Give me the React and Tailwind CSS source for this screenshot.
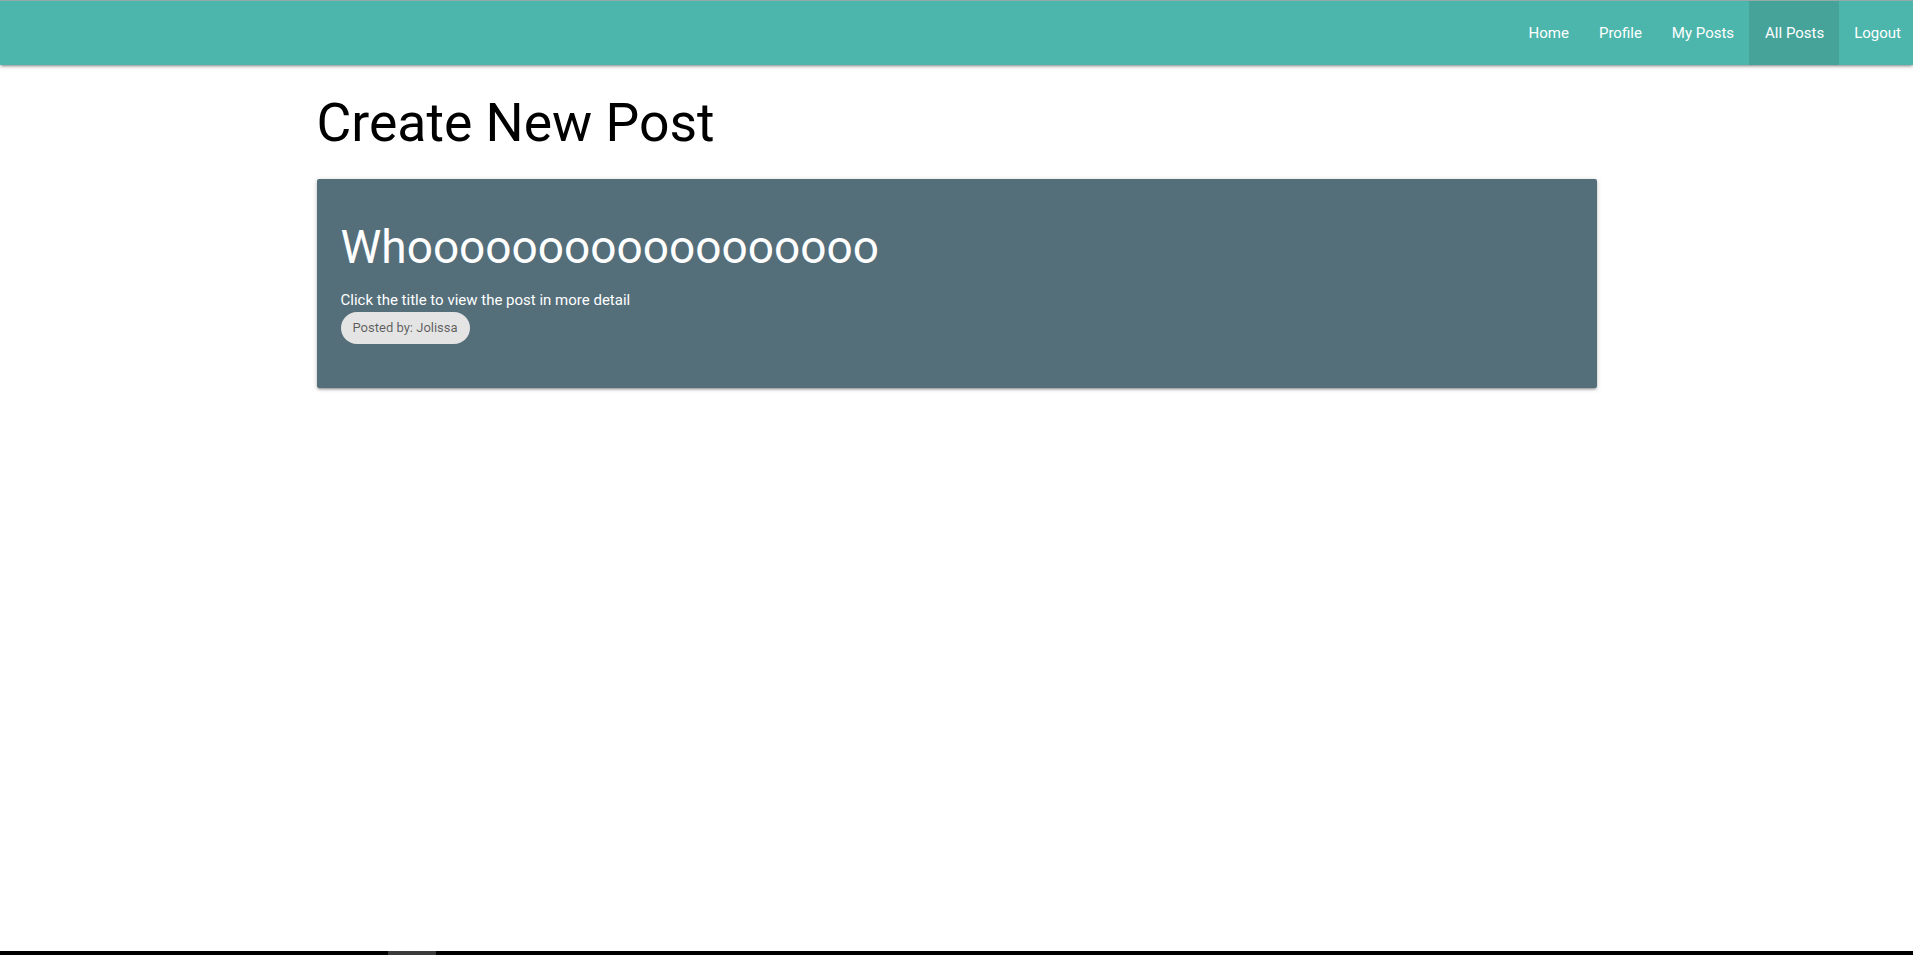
import React from "react";

const links = ["Home", "Profile", "My Posts", "All Posts", "Logout"];

function Navbar() {
  return (
    <nav className="h-[65px] bg-[#4db6ac] border-t border-[#93aaa8] shadow-[0_2px_2px_0_rgba(0,0,0,0.14),0_3px_1px_-2px_rgba(0,0,0,0.12),0_1px_5px_0_rgba(0,0,0,0.2)] flex justify-end relative z-10">
      <ul className="flex h-full">
        {links.map((l) => (
          <li key={l} className="h-full">
            <a
              href="#"
              className={
                "h-full flex items-center text-[15px] text-white " +
                (l === "All Posts" ? "bg-black/10 pl-[16px] pr-[15px]" : l === "Logout" ? "pl-[15px] pr-[12px]" : "px-[15px]")
              }
            >
              {l}
            </a>
          </li>
        ))}
      </ul>
    </nav>
  );
}

function PostCard({ title, author }) {
  return (
    <div className="bg-[#546e7a] rounded-[2px] shadow-[0_2px_2px_0_rgba(0,0,0,0.14),0_3px_1px_-2px_rgba(0,0,0,0.12),0_1px_5px_0_rgba(0,0,0,0.2)] px-6 pt-6 pb-[44px]">
      <h4 className="mt-[19px] text-[46px] leading-[1.1] text-white font-normal">
        <a href="#">{title}</a>
      </h4>
      <p className="mt-[17px] text-[15px] leading-[22.5px] text-white">Click the title to view the post in more detail</p>
      <div className="inline-flex items-center h-8 px-3 rounded-2xl bg-[#e4e4e4] text-[13px] text-black/60">
        Posted by: {author}
      </div>
    </div>
  );
}

export default function App() {
  return (
    <div className="min-h-screen flex flex-col bg-white font-['Roboto',sans-serif]">
      <Navbar />
      <main className="flex-1 w-[1280px] mx-auto">
        <h3 className="mt-[29px] text-[53.5px] leading-[1.1] text-black font-normal">Create New Post</h3>
        <div className="mt-[26px]">
          <PostCard title="Whoooooooooooooooooo" author="Jolissa" />
        </div>
      </main>
      <div className="h-[4px] bg-black flex">
        <div className="w-[388px]" />
        <div className="w-[48px] bg-[#3a3a3a]" />
      </div>
    </div>
  );
}
